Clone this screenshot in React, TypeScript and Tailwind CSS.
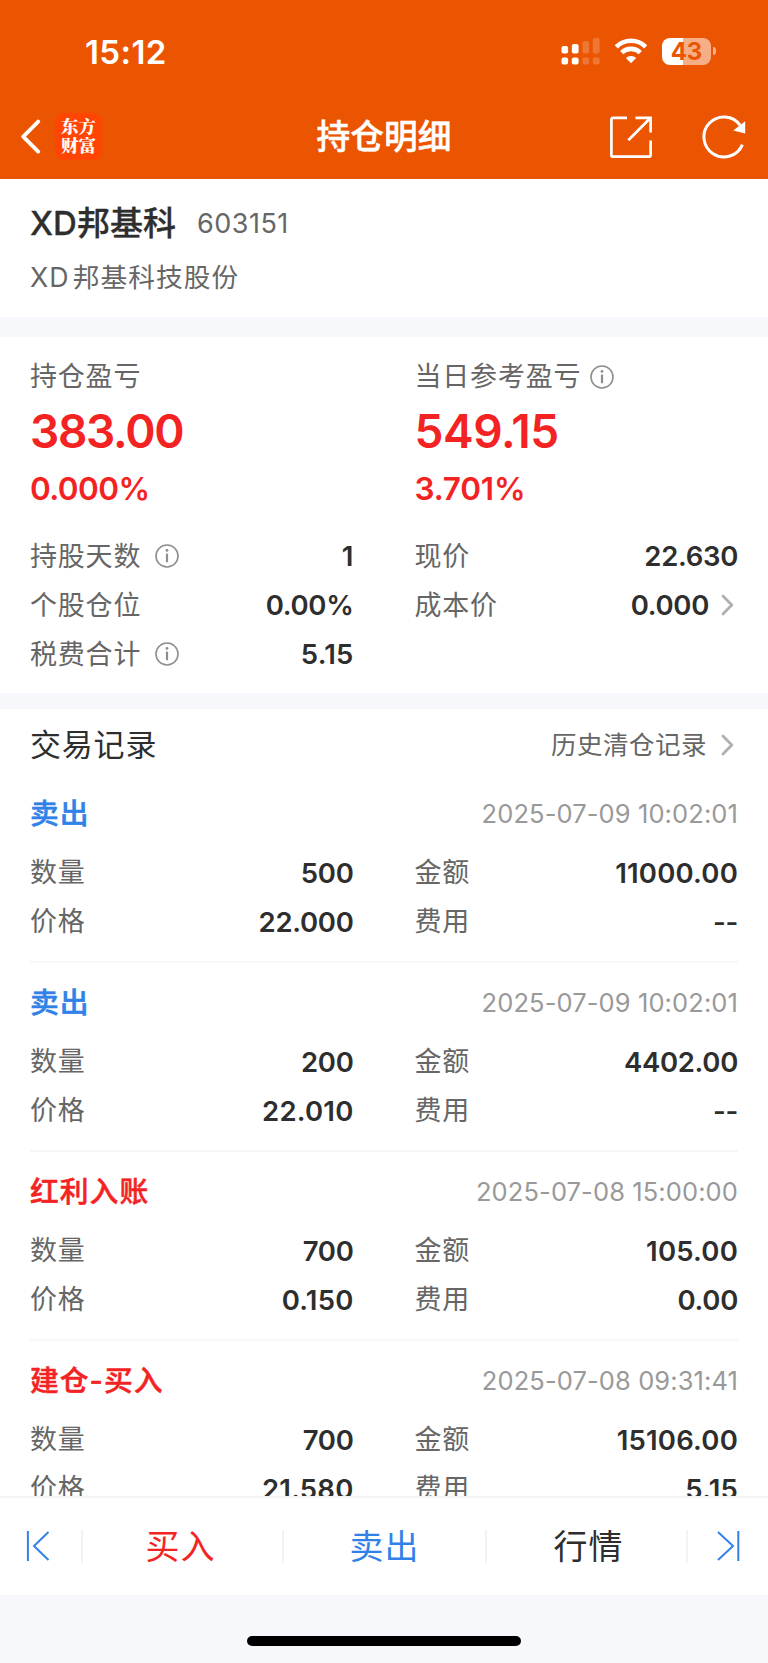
import type { ReactNode } from 'react';
import clsx from 'clsx';

interface TradeRecord {
  type: string;
  color: 'blue' | 'red';
  time: string;
  count: string;
  amount: string;
  price: string;
  fee: string;
}

const records: TradeRecord[] = [
  { type: '卖出', color: 'blue', time: '2025-07-09 10:02:01', count: '500', amount: '11000.00', price: '22.000', fee: '--' },
  { type: '卖出', color: 'blue', time: '2025-07-09 10:02:01', count: '200', amount: '4402.00', price: '22.010', fee: '--' },
  { type: '红利入账', color: 'red', time: '2025-07-08 15:00:00', count: '700', amount: '105.00', price: '0.150', fee: '0.00' },
  { type: '建仓-买入', color: 'red', time: '2025-07-08 09:31:41', count: '700', amount: '15106.00', price: '21.580', fee: '5.15' },
];

function InfoIcon({ className }: { className?: string }) {
  return (
    <svg className={className} width="24" height="24" viewBox="0 0 24 24" fill="none" stroke="#8e8e8e">
      <circle cx="12" cy="12" r="11" strokeWidth="1.6" />
      <path d="M12 9.6v8.6" strokeWidth="2.2" />
      <circle cx="12" cy="6.4" r="1.4" fill="#8e8e8e" stroke="none" />
    </svg>
  );
}

function ChevronIcon() {
  return (
    <svg width="14" height="22" viewBox="0 0 14 22" fill="none" stroke="#b0b0b0" strokeWidth="2.8" strokeLinecap="round" strokeLinejoin="round">
      <polyline points="2 2 10.8 11 2 20" />
    </svg>
  );
}

function Label({ children }: { children: ReactNode }) {
  return <span className="pt-px text-[27px] leading-[40px] tracking-[0.8px] text-[#666]">{children}</span>;
}

function Row({ label, value, info, arrow }: { label: string; value: string; info?: boolean; arrow?: boolean }) {
  return (
    <div className="flex h-[49.2px] items-center">
      <Label>{label}</Label>
      {info && <InfoIcon className="ml-[14px]" />}
      {/* the digit 1 is narrow, values with it are spaced a bit wider */}
      <span
        className={clsx(
          'ml-auto text-[27.5px] leading-[40px] font-semibold text-[#2e2e2e]',
          value.includes('1') ? 'tracking-[0.2px]' : 'tracking-[-0.3px]'
        )}
      >
        {value}
      </span>
      {arrow && (
        <span className="mr-[3px] ml-[12px]">
          <ChevronIcon />
        </span>
      )}
    </div>
  );
}

function Profit({ label, value, percent, icon, tight }: { label: string; value: string; percent: string; icon?: ReactNode; tight?: boolean }) {
  return (
    <div className="text-[#f42323]">
      <div className="flex h-[40px] items-center pt-px">
        <Label>{label}</Label>
        {icon}
      </div>
      <div className={clsx('mt-[8px] text-[46px] leading-[54px] font-semibold', tight ? 'tracking-[-1.3px]' : 'tracking-[-0.4px]')}>
        {value}
      </div>
      <div className={clsx('mt-[12px] text-[31.5px] leading-[38px] font-semibold', tight ? 'tracking-[-0.6px]' : 'tracking-[-0.2px]')}>
        {percent}
      </div>
    </div>
  );
}

function StatusBar() {
  return (
    <div className="flex h-[102px] items-center pr-[52px] pl-[85px] text-white">
      <span className="pt-[2px] text-[33px] leading-[40px] font-semibold tracking-[0.4px]">15:12</span>
      <svg className="ml-auto" width="40" height="28" viewBox="0 0 40 28" fill="#fff">
        <rect x="0.5" y="9" width="6.6" height="7.6" rx="2" />
        <rect x="0.5" y="20.4" width="6.6" height="7.2" rx="2" />
        <rect x="10.8" y="7" width="6.8" height="9.6" rx="2" />
        <rect x="10.8" y="20.4" width="6.8" height="7.2" rx="2" />
        <g opacity="0.2">
          <rect x="21.5" y="4" width="6.6" height="12.6" rx="2" />
          <rect x="21.5" y="20.4" width="6.6" height="7.2" rx="2" />
          <rect x="31.8" y="1" width="6.8" height="15.6" rx="2" />
          <rect x="31.8" y="20.4" width="6.8" height="7.2" rx="2" />
        </g>
      </svg>
      <svg className="ml-[13px]" width="34" height="26" viewBox="0 0 34 26" fill="none" stroke="#fff" strokeWidth="4.6">
        <path d="M2.3 8.8a21 21 0 0 1 29.4 0" />
        <path d="M7.7 14.6a13.4 13.4 0 0 1 18.6 0" />
        <path d="M17 25.2 11.8 20a7.6 7.6 0 0 1 10.4 0z" fill="#fff" stroke="none" />
      </svg>
      <div className="ml-[14px] flex items-center">
        <div className="flex h-[27px] w-[49px] items-center justify-center rounded-[8px] bg-linear-to-r from-white from-43% to-[#f5ae86] to-43% text-[24px] leading-[27px] font-bold text-[#eb5502]">
          43
        </div>
        <div className="ml-[2px] h-[8px] w-[3px] rounded-r-full bg-[#f5ae86]" />
      </div>
    </div>
  );
}

function NavBar() {
  return (
    <div className="grid h-[77px] grid-cols-[1fr_auto_1fr] items-center pb-[8px] text-white">
      <div className="flex items-center pl-[20px]">
        <svg width="22" height="36" viewBox="0 0 22 36" fill="none" stroke="#fff" strokeWidth="3.8" strokeLinecap="round" strokeLinejoin="round">
          <polyline points="18.2 2.6 3.2 17.6 18.2 32.6" />
        </svg>
        <div className="ml-[13px] flex h-[47px] w-[47px] flex-col items-center justify-center rounded-[9px] bg-[#ff4501] pb-[3px] font-['Noto_Serif_CJK_SC','Noto_Sans_CJK_SC',serif] text-[17.5px] leading-[19.5px] font-black">
          <span>东方</span>
          <span>财富</span>
        </div>
      </div>
      <h1 className="text-[33.7px] leading-[48px] font-medium [-webkit-text-stroke:0.5px_white]">持仓明细</h1>
      <div className="flex items-center justify-end pr-[21px]">
        <svg width="44" height="44" viewBox="0 0 44 44" fill="none" stroke="#fff" strokeWidth="2.7">
          <path d="M18 2.8H4.2A1.8 1.8 0 0 0 2.4 4.6V39.9A1.8 1.8 0 0 0 4.2 41.7H39.8A1.8 1.8 0 0 0 41.6 39.9V25.5" />
          <path d="M26.5 2.8H41.6V17.5M41.4 3 19.3 25.2" />
        </svg>
        <svg className="ml-[49px]" width="45" height="44" viewBox="0 0 45 44" fill="none" stroke="#fff" strokeWidth="3">
          <path d="M40.4 29.6A20 20 0 1 1 38.2 10.3" />
          <path d="M43.2 6.3V18.6L31.2 15.4z" fill="#fff" stroke="none" />
        </svg>
      </div>
    </div>
  );
}

function RecordItem({ record, last }: { record: TradeRecord; last: boolean }) {
  return (
    <div className={clsx('mx-[30px] h-[189px] shrink-0 pt-[19px]', !last && 'border-b-2 border-[#f7f7f8]')}>
      <div className="flex h-[42px] items-center justify-between">
        <span
          className={clsx(
            'text-[28.8px] leading-[42px] font-medium tracking-[1px] [-webkit-text-stroke:0.5px_currentColor]',
            record.color === 'blue' ? 'text-[#3182e8]' : 'text-[#f42323]'
          )}
        >
          {record.type}
        </span>
        <span className="text-[25.5px] leading-[42px] tracking-[0.1px] text-[#999]">{record.time}</span>
      </div>
      <div className="mt-[13px] grid grid-cols-2 gap-x-[61px]">
        <Row label="数量" value={record.count} />
        <Row label="金额" value={record.amount} />
        <Row label="价格" value={record.price} />
        <Row label="费用" value={record.fee} />
      </div>
    </div>
  );
}

function BottomBar() {
  return (
    <div className="flex h-[99px] shrink-0 items-center border-t-2 border-[#f3f3f4] bg-white text-[34px] leading-[48px] tracking-[1px]">
      <button className="flex w-[81px] pl-[26px]">
        <svg width="24" height="32" viewBox="0 0 24 32" fill="none" stroke="#3182e8" strokeWidth="2">
          <path d="M1.9 0v30M22.5 1 8 15 22.5 29" />
        </svg>
      </button>
      <div className="h-[33px] w-[2px] bg-[#f3f3f4]" />
      <button className="w-[199px] pr-[4px] text-[#f42323]">买入</button>
      <div className="h-[33px] w-[2px] bg-[#f3f3f4]" />
      <button className="w-[201px] text-[#3182e8]">卖出</button>
      <div className="h-[33px] w-[2px] bg-[#f3f3f4]" />
      <button className="w-[199px] pl-[4px] text-[#2e2e2e]">行情</button>
      <div className="h-[33px] w-[2px] bg-[#f3f3f4]" />
      <button className="flex flex-1 justify-end pr-[28px]">
        <svg width="24" height="32" viewBox="0 0 24 32" fill="none" stroke="#3182e8" strokeWidth="2">
          <path d="M22.3 0v30M2 1 17 15 2 29" />
        </svg>
      </button>
    </div>
  );
}

export default function App() {
  return (
    <div className="flex h-[1663px] w-[768px] flex-col overflow-hidden bg-[#f6f8fb] font-['Inter','Noto_Sans_CJK_SC',sans-serif]">
      <header className="h-[179px] shrink-0 bg-[#eb5502]">
        <StatusBar />
        <NavBar />
      </header>

      {/* Stock name */}
      <section className="h-[138px] shrink-0 bg-white px-[30px] pt-[19px]">
        <div className="flex items-center">
          <span className="text-[33px] leading-[48px] font-medium text-[#2e2e2e] [-webkit-text-stroke:0.3px_currentColor]">XD邦基科</span>
          <span className="ml-[21px] pt-[2px] text-[27px] leading-[48px] tracking-[0.5px] text-[#666]">603151</span>
        </div>
        <div className="mt-[9px] text-[26.7px] leading-[40px] tracking-[1.1px] text-[#666]">
          <span className="mr-[3px]">XD</span>邦基科技股份
        </div>
      </section>

      {/* Position summary */}
      <section className="mt-[20px] h-[356px] shrink-0 bg-white px-[30px] pt-[19px]">
        <div className="grid grid-cols-2 gap-x-[61px]">
          <Profit label="持仓盈亏" value="383.00" percent="0.000%" tight />
          <Profit label="当日参考盈亏" value="549.15" percent="3.701%" icon={<InfoIcon className="ml-[9px]" />} />
        </div>
        <div className="mt-[23.5px] grid grid-cols-2 gap-x-[61px]">
          <Row label="持股天数" value="1" info />
          <Row label="现价" value="22.630" />
          <Row label="个股仓位" value="0.00%" />
          <Row label="成本价" value="0.000" arrow />
          <Row label="税费合计" value="5.15" info />
        </div>
      </section>

      {/* Trade records */}
      <section className="mt-[16px] flex min-h-0 flex-1 flex-col overflow-hidden bg-white">
        <div className="mx-[30px] flex h-[65px] shrink-0 items-center pt-[7px]">
          <h2 className="text-[31px] leading-[48px] tracking-[0.8px] text-[#2e2e2e]">交易记录</h2>
          <span className="ml-auto text-[25.5px] leading-[40px] tracking-[0.5px] text-[#666]">历史清仓记录</span>
          <span className="mr-[3px] ml-[14px]">
            <ChevronIcon />
          </span>
        </div>
        {records.map((record, i) => (
          <RecordItem key={i} record={record} last={i === records.length - 1} />
        ))}
      </section>

      <BottomBar />

      <div className="flex h-[68px] shrink-0 justify-center pt-[41px]">
        <div className="h-[10px] w-[274px] rounded-full bg-black" />
      </div>
    </div>
  );
}
